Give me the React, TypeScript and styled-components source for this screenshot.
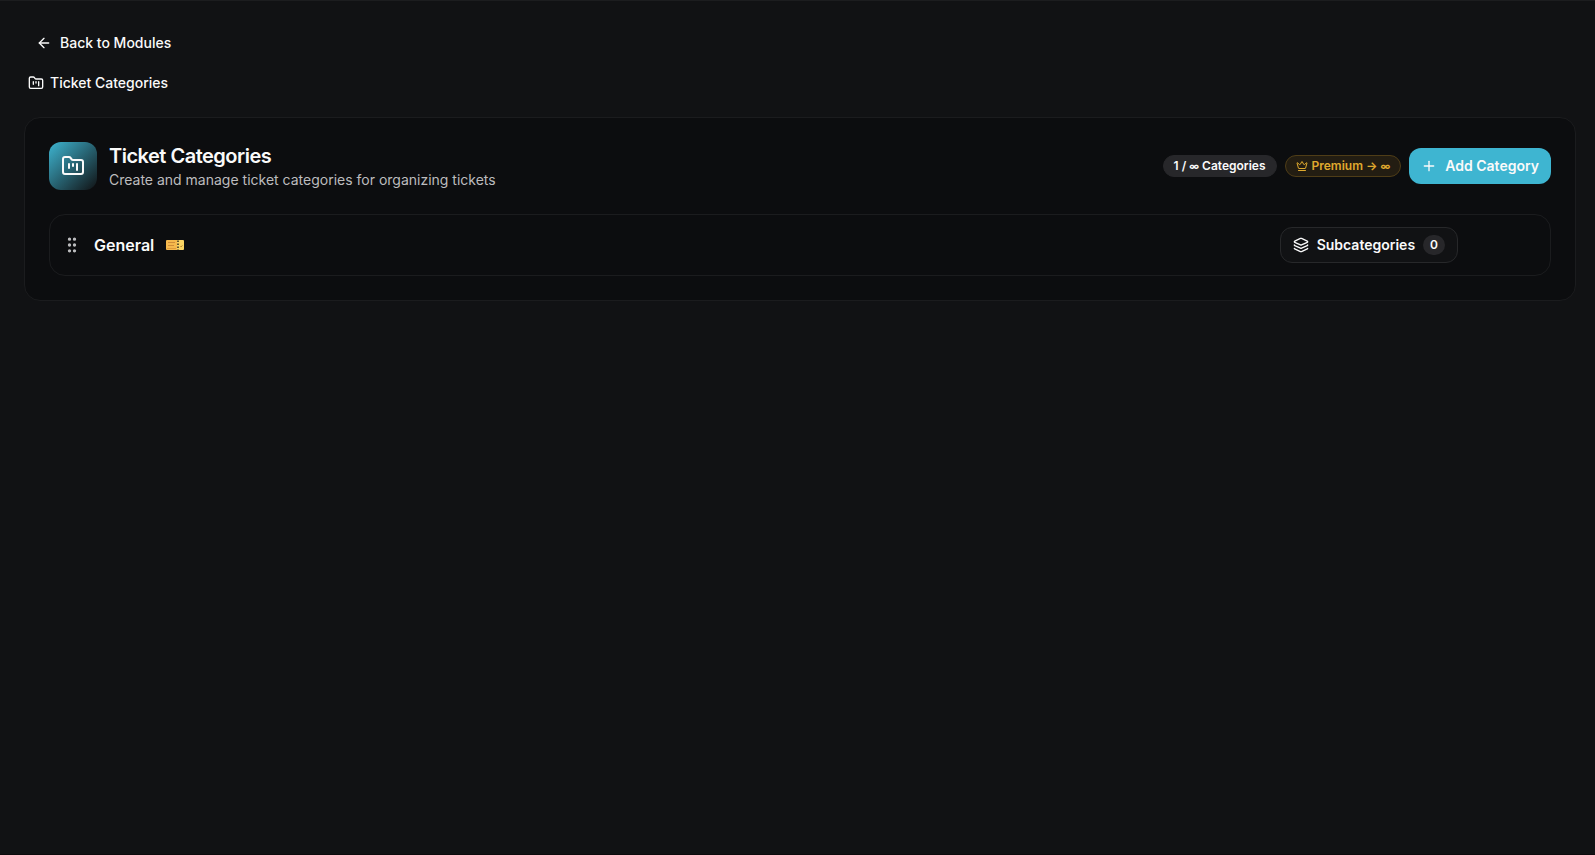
import React from "react";
import styled, { createGlobalStyle } from "styled-components";
import { ArrowLeft, Crown, FolderKanban, GripVertical, Layers, Plus } from "lucide-react";

const GlobalStyle = createGlobalStyle`
  *, *::before, *::after { box-sizing: border-box; }
  body {
    margin: 0;
    min-height: 100vh;
    background: #111214;
    color: #fafafa;
    font-family: Inter, "Liberation Sans", sans-serif;
    font-size: 14px;
    line-height: 20px;
  }
  h1, p, ul { margin: 0; padding: 0; }
  button { font: inherit; color: inherit; cursor: pointer; }
`;

const Page = styled.main`
  display: flex;
  flex-direction: column;
  min-height: 100vh;
  padding: 24px 19px 24px 24px;
  border-top: 1px solid #1c1d1f;
  border-bottom: 1px solid #0c0a0c;
`;

const BackLink = styled.a`
  display: inline-flex;
  align-items: center;
  align-self: flex-start;
  gap: 8px;
  height: 36px;
  padding: 0 12px;
  border-radius: 12px;
  color: inherit;
  font-weight: 500;
  text-decoration: none;
`;

const Breadcrumb = styled.nav`
  display: flex;
  align-items: center;
  gap: 6px;
  margin: 12px 0 24px;
  padding: 0 4px;
  font-weight: 500;
`;

const Card = styled.section`
  display: flex;
  flex-direction: column;
  gap: 24px;
  padding: 24px;
  border: 1px solid #1b1c1e;
  border-radius: 16px;
  background: #0c0d0f;
`;

const CardHeader = styled.header`
  display: flex;
  align-items: center;
  justify-content: space-between;
  gap: 16px;
`;

const Heading = styled.div`
  display: flex;
  align-items: center;
  gap: 12px;
`;

const IconTile = styled.div`
  display: grid;
  place-items: center;
  width: 48px;
  height: 48px;
  border-radius: 12px;
  background: linear-gradient(135deg, #3eb5d1, #111214);
`;

const Title = styled.h1`
  font-size: 20px;
  line-height: 28px;
  font-weight: 600;
  letter-spacing: -0.025em;
`;

const Subtitle = styled.p`
  color: #bcbcbe;
`;

const Actions = styled.div`
  display: flex;
  align-items: center;
  gap: 8px;
`;

const Pill = styled.span<{ $tone: "neutral" | "gold" }>`
  display: inline-flex;
  align-items: center;
  gap: 4px;
  padding: 2px 10px;
  border: 1px solid ${(p) => (p.$tone === "gold" ? "#4f3d17" : "#27272a")};
  border-radius: 999px;
  background: ${(p) => (p.$tone === "gold" ? "#231d12" : "#27272a")};
  color: ${(p) => (p.$tone === "gold" ? "#e0aa2e" : "#fafafa")};
  font-size: 12px;
  line-height: 16px;
  font-weight: 600;
`;

const Infinite = styled.span`
  font-size: 10px;
  line-height: 1;
  font-weight: 700;
`;

const Button = styled.button<{ $variant: "primary" | "outline" }>`
  display: inline-flex;
  align-items: center;
  gap: 8px;
  height: 36px;
  padding: 0 12px;
  border: ${(p) => (p.$variant === "outline" ? "1px solid #27282a" : "none")};
  border-radius: 12px;
  background: ${(p) => (p.$variant === "primary" ? "#3eb5d1" : "#111214")};
  font-weight: 600;
`;

const CategoryList = styled.ul`
  list-style: none;
`;

const CategoryRow = styled.li`
  display: flex;
  align-items: center;
  gap: 12px;
  padding: 12px;
  border: 1px solid #1b1c1e;
  border-radius: 16px;
`;

const Grip = styled(GripVertical)`
  color: #bcbcbe;
`;

const CategoryName = styled.span`
  font-size: 16px;
  line-height: 24px;
  font-weight: 600;
`;

const RowActions = styled.div`
  margin-left: auto;
  padding-right: 80px;
`;

const Count = styled.span`
  padding: 2px 7px;
  border-radius: 999px;
  background: #27272a;
  font-size: 12px;
  line-height: 16px;
`;

const TicketIcon = () => (
  <svg width="18" height="18" viewBox="0 0 18 18" role="img" aria-label="Ticket">
    <path d="M1 4h10v10H1a1 1 0 0 1-1-1V5a1 1 0 0 1 1-1z" fill="#f5b94d" />
    <path d="M11 4h6a1 1 0 0 1 1 1v8a1 1 0 0 1-1 1h-6z" fill="#fbd463" />
    <path d="M2 6.500h7M2 9.500h6" stroke="#cf8c38" strokeWidth="1" />
    <path d="M1 12.500h9" stroke="#e09a3a" strokeWidth="1" />
    <path d="M12 4.500v9.500" stroke="#3d3420" strokeWidth="1.6" strokeDasharray="1.6 1.4" />
    <path d="M14.500 10.500h1l.8-1" stroke="#a8761f" fill="none" />
  </svg>
);

const categories = [{ name: "General", subcategories: 0 }];

export default function App() {
  return (
    <>
      <GlobalStyle />
      <Page>
        <BackLink href="#modules">
          <ArrowLeft size={16} />
          Back to Modules
        </BackLink>
        <Breadcrumb aria-label="Breadcrumb">
          <FolderKanban size={16} />
          <span>Ticket Categories</span>
        </Breadcrumb>
        <Card>
          <CardHeader>
            <Heading>
              <IconTile>
                <FolderKanban size={24} />
              </IconTile>
              <div>
                <Title>Ticket Categories</Title>
                <Subtitle>Create and manage ticket categories for organizing tickets</Subtitle>
              </div>
            </Heading>
            <Actions>
              <Pill $tone="neutral">
                <span>
                  1 / <Infinite>∞</Infinite> Categories
                </span>
              </Pill>
              <Pill $tone="gold">
                <Crown size={12} />
                <span>
                  Premium → <Infinite>∞</Infinite>
                </span>
              </Pill>
              <Button type="button" $variant="primary">
                <Plus size={16} />
                Add Category
              </Button>
            </Actions>
          </CardHeader>
          <CategoryList>
            {categories.map((category) => (
              <CategoryRow key={category.name}>
                <Grip size={20} />
                <CategoryName>{category.name}</CategoryName>
                <TicketIcon />
                <RowActions>
                  <Button type="button" $variant="outline">
                    <Layers size={16} />
                    Subcategories
                    <Count>{category.subcategories}</Count>
                  </Button>
                </RowActions>
              </CategoryRow>
            ))}
          </CategoryList>
        </Card>
      </Page>
    </>
  );
}
